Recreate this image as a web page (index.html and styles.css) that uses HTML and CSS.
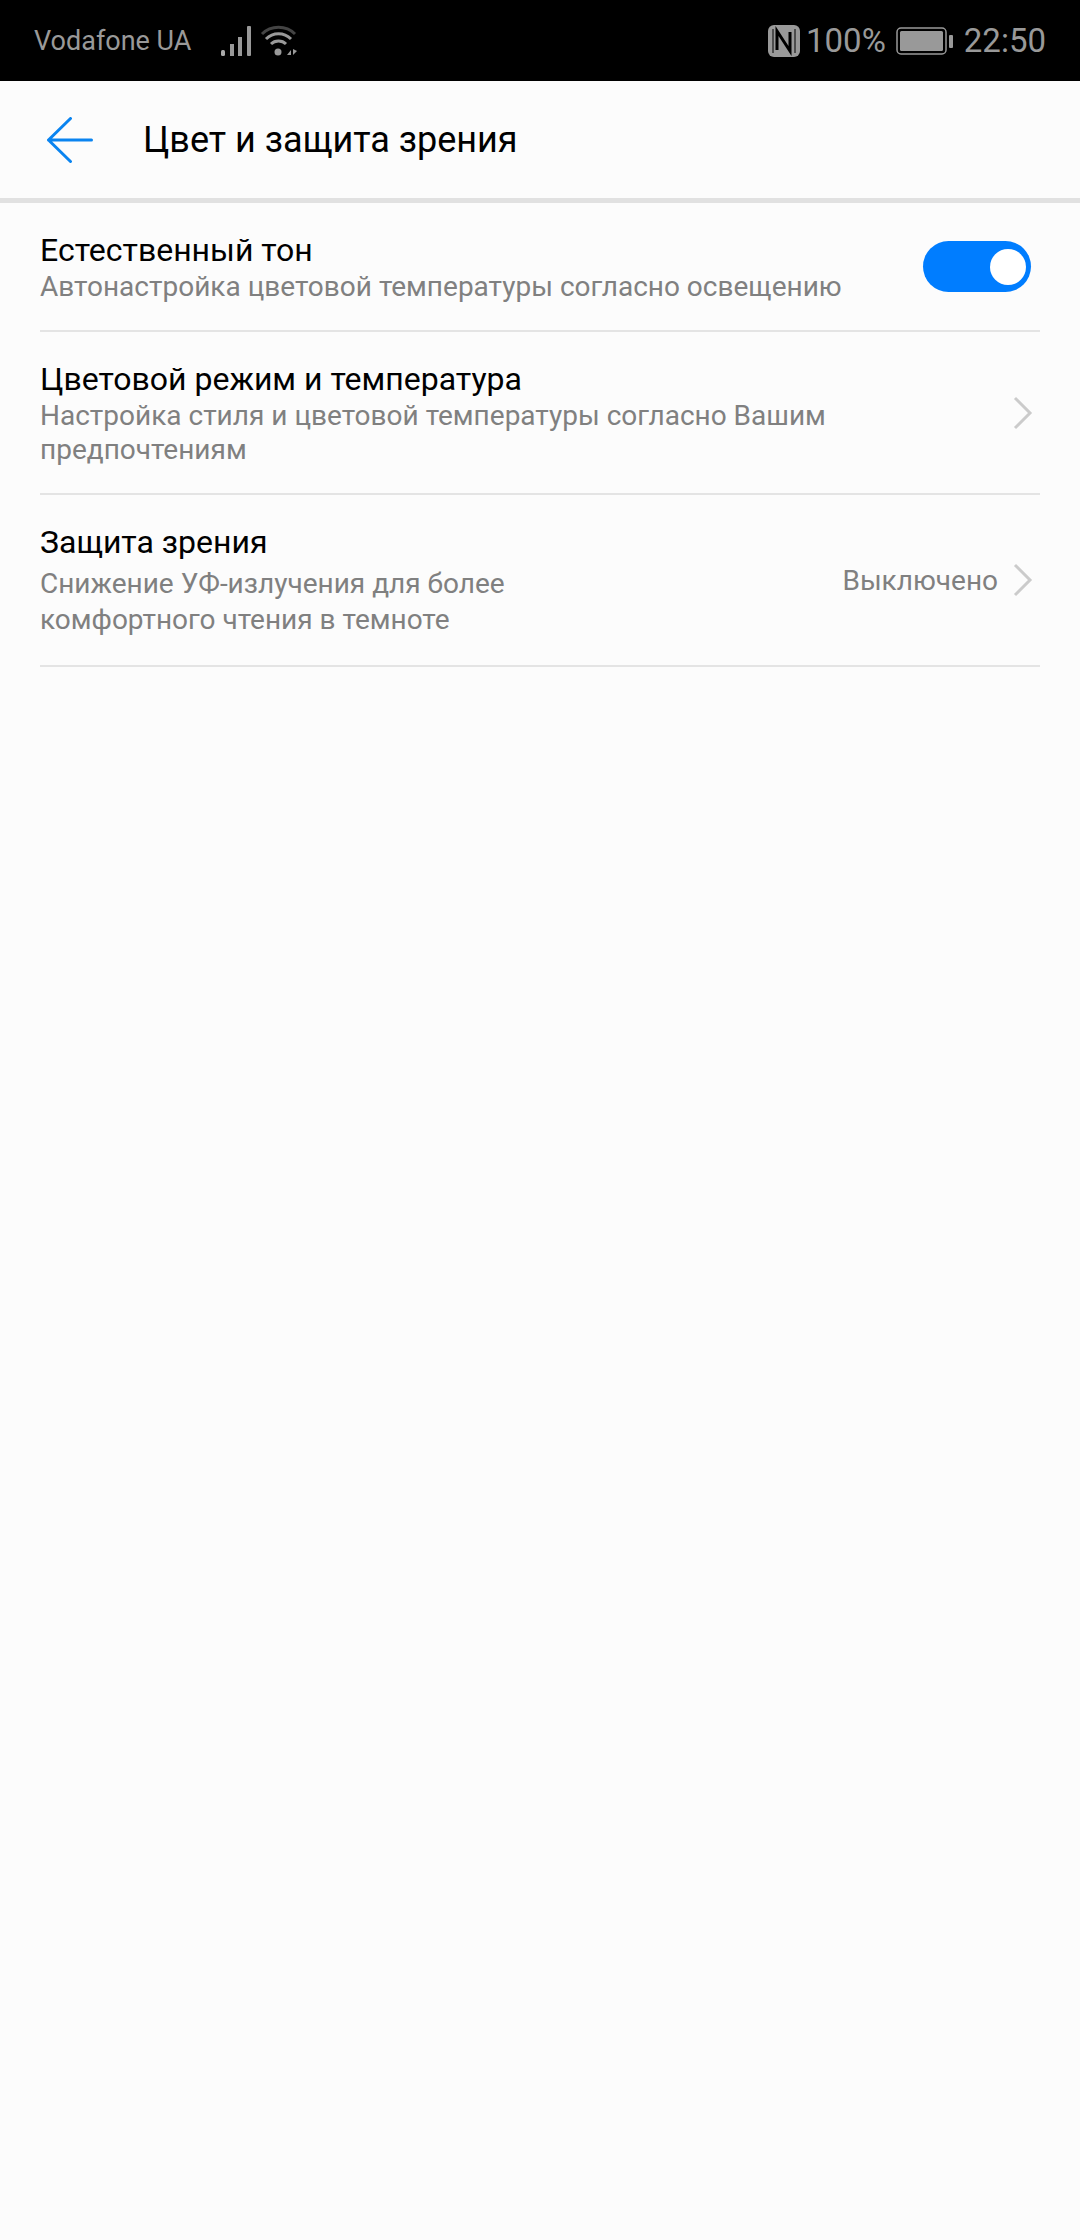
FILE: index.html
```html
<!DOCTYPE html>
<html>
    <head>
        <meta charset="utf-8">
        <title>Цвет и защита зрения</title>
        <link rel="stylesheet" href="styles.css">
    </head>
    <body>
        <div class="status-bar">
            <div class="status-left">
                <span class="carrier">Vodafone UA</span>
                <svg class="icon-signal" width="34" height="32" viewBox="0 0 34 32">
                    <rect x="0" y="25" width="4" height="6" rx="1.5" fill="#aaa"/>
                    <rect x="9" y="19" width="4" height="12" fill="#999"/>
                    <rect x="17" y="12" width="4" height="19" fill="#999"/>
                    <rect x="26" y="1" width="4" height="30" rx="1" fill="#999"/>
                </svg>
                <svg class="icon-wifi" width="38" height="32" viewBox="0 0 38 32">
                    <path d="M2 9 C11 0 26 0 35 9" fill="none" stroke="#444" stroke-width="3"/>
                    <path d="M6 14 C13 7 24 7 31 14" fill="none" stroke="#999" stroke-width="3"/>
                    <path d="M11 19 C15 15 22 15 26 19" fill="none" stroke="#999" stroke-width="3"/>
                    <circle cx="18" cy="27" r="3.5" fill="#999"/>
                    <path d="M27 30 L31 25 L31 30 Z M33 24 L37 26 L33 30 Z" fill="#999"/>
                </svg>
            </div>
            <div class="status-right">
                <svg class="icon-nfc" width="32" height="32" viewBox="0 0 32 32">
                    <rect x="0" y="0" width="32" height="32" rx="6" fill="#999"/>
                    <path d="M9 25 L9 6 L22 26 L22 7" fill="none" stroke="#000" stroke-width="3"/>
                    <path d="M5 4 L5 28 M27 4 L27 28" stroke="#000" stroke-width="1"/>
                </svg>
                <span class="percent">100%</span>
                <svg class="icon-battery" width="58" height="28" viewBox="0 0 58 28">
                    <rect x="1" y="1" width="49" height="26" rx="4" fill="none" stroke="#999" stroke-width="1.5"/>
                    <rect x="4" y="4" width="43" height="20" rx="1.5" fill="#999"/>
                    <rect x="53" y="8" width="4" height="13" rx="1" fill="#999"/>
                </svg>
                <span class="clock">22:50</span>
            </div>
        </div>

        <div class="top-bar">
            <svg class="icon-back" width="46" height="46" viewBox="0 0 46 46">
                <path d="M23.5 1.5 L1.5 23 L23.5 44.5 M1.5 23 L44.5 23" fill="none" stroke="#0a84f0" stroke-width="3" stroke-linecap="round" stroke-linejoin="round"/>
            </svg>
            <h1 class="page-title">Цвет и защита зрения</h1>
        </div>

        <div class="settings-list">
            <div class="row row-tone">
                <div class="row-text">
                    <div class="row-title">Естественный тон</div>
                    <div class="row-sub">Автонастройка цветовой температуры согласно освещению</div>
                </div>
                <div class="switch"><div class="knob"></div></div>
            </div>
            <div class="row row-mode">
                <div class="row-text">
                    <div class="row-title">Цветовой режим и температура</div>
                    <div class="row-sub">Настройка стиля и цветовой температуры согласно Вашим<br>предпочтениям</div>
                </div>
                <svg class="chevron" width="20" height="34" viewBox="0 0 20 34">
                    <path d="M2 2 L17 17 L2 32" fill="none" stroke="#cbcbcb" stroke-width="3"/>
                </svg>
            </div>
            <div class="row row-eye">
                <div class="row-text">
                    <div class="row-title">Защита зрения</div>
                    <div class="row-sub">Снижение УФ-излучения для более<br>комфортного чтения в темноте</div>
                </div>
                <span class="row-value">Выключено</span>
                <svg class="chevron" width="20" height="34" viewBox="0 0 20 34">
                    <path d="M2 2 L17 17 L2 32" fill="none" stroke="#cbcbcb" stroke-width="3"/>
                </svg>
            </div>
        </div>
    </body>
</html>
```

FILE: styles.css
```css
html, body {
    margin: 0;
    padding: 0;
}
body {
    width: 1080px;
    height: 2240px;
    overflow: hidden;
    background: #fcfcfc;
    font-family: Roboto, "Noto Sans", sans-serif;
}
svg {
    display: block;
    flex: none;
}

.status-bar {
    height: 81px;
    background: #000;
    color: #999;
    display: flex;
    align-items: center;
    justify-content: space-between;
    padding: 0 34px;
    box-sizing: border-box;
}
.status-left, .status-right {
    display: flex;
    align-items: center;
}
.carrier {
    font-size: 27px;
}
.icon-signal {
    margin-left: 30px;
}
.icon-wifi {
    margin-left: 5px;
}
.percent, .clock {
    font-size: 33px;
}
.percent {
    margin-left: 6px;
}
.icon-battery {
    margin-left: 10px;
}
.clock {
    margin-left: 10px;
}

.top-bar {
    height: 117px;
    border-bottom: 5px solid #e1e1e1;
    display: flex;
    align-items: center;
    padding-left: 47px;
}
.page-title {
    margin: 0 0 0 50px;
    font-size: 36px;
    font-weight: 400;
    color: #000;
}

.settings-list {
    margin: 0 40px;
}
.row {
    display: flex;
    align-items: center;
    border-bottom: 2px solid #e4e4e4;
    box-sizing: border-box;
}
.row-tone {
    height: 129px;
}
.row-mode {
    height: 163px;
}
.row-eye {
    height: 172px;
}
.row-text {
    flex: 1;
}
.row-title {
    font-size: 32px;
    line-height: 40px;
    color: #000;
}
.row-sub {
    font-size: 28px;
    line-height: 34px;
    color: #808080;
}
.row-eye .row-sub {
    line-height: 36px;
    margin-top: 4px;
}
.row-value {
    font-size: 28px;
    color: #808080;
    margin-right: 15px;
}
.chevron {
    margin-right: 7px;
}
.switch {
    width: 108px;
    height: 51px;
    margin-right: 9px;
    border-radius: 26px;
    background: #007dff;
    display: flex;
    align-items: center;
    justify-content: flex-end;
    padding-right: 5px;
    box-sizing: border-box;
}
.knob {
    width: 36px;
    height: 36px;
    border-radius: 50%;
    background: #fff;
}
```
